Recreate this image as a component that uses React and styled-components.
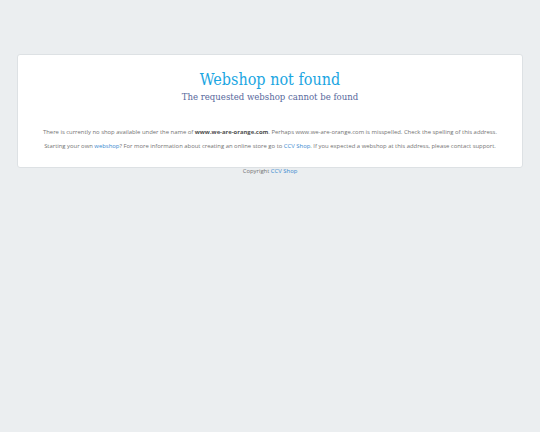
import styled, { createGlobalStyle } from "styled-components";

const GlobalStyle = createGlobalStyle`
  html, body {
    margin: 0;
    padding: 0;
    background: #ebeef0;
  }
  body {
    font-family: "Open Sans", "Liberation Sans", sans-serif;
    color: #777;
  }
`;

const Page = styled.div`
  padding: 54px 17px 0;
`;

const Card = styled.div`
  background: #fff;
  border: 1px solid #dde1e4;
  border-radius: 3px;
  padding: 14px 20px 14px;
  text-align: center;
`;

const Title = styled.h1`
  margin: 0;
  font-family: "DejaVu Serif", serif;
  font-stretch: condensed;
  font-weight: 300;
  font-size: 16px;
  line-height: 21px;
  color: #1ba6e2;
`;

const Subtitle = styled.h2`
  margin: 0 0 21px;
  font-family: "DejaVu Serif", serif;
  font-stretch: condensed;
  font-weight: 300;
  font-size: 9.5px;
  line-height: 14px;
  color: #57689c;
`;

const Text = styled.p`
  margin: 0;
  font-size: 5.9px;
  line-height: 14px;
  color: #737373;
  white-space: nowrap;

  b {
    color: #4f4f4f;
    font-weight: 700;
  }
`;

const Link = styled.a`
  color: #3789cf;
  text-decoration: none;
`;

const Footer = styled.div`
  text-align: center;
  font-size: 5.9px;
  line-height: 7px;
  color: #737373;
`;

export default function App() {
  return (
    <>
      <GlobalStyle />
      <Page>
        <Card>
          <Title>Webshop not found</Title>
          <Subtitle>The requested webshop cannot be found</Subtitle>
          <Text>
            There is currently no shop available under the name of{" "}
            <b>www.we-are-orange.com</b>. Perhaps www.we-are-orange.com is
            misspelled. Check the spelling of this address.
          </Text>
          <Text>
            Starting your own <Link href="#">webshop</Link>? For more
            information about creating an online store go to{" "}
            <Link href="#">CCV Shop</Link>. If you expected a webshop at this
            address, please contact support.
          </Text>
        </Card>
        <Footer>
          Copyright <Link href="#">CCV Shop</Link>
        </Footer>
      </Page>
    </>
  );
}
